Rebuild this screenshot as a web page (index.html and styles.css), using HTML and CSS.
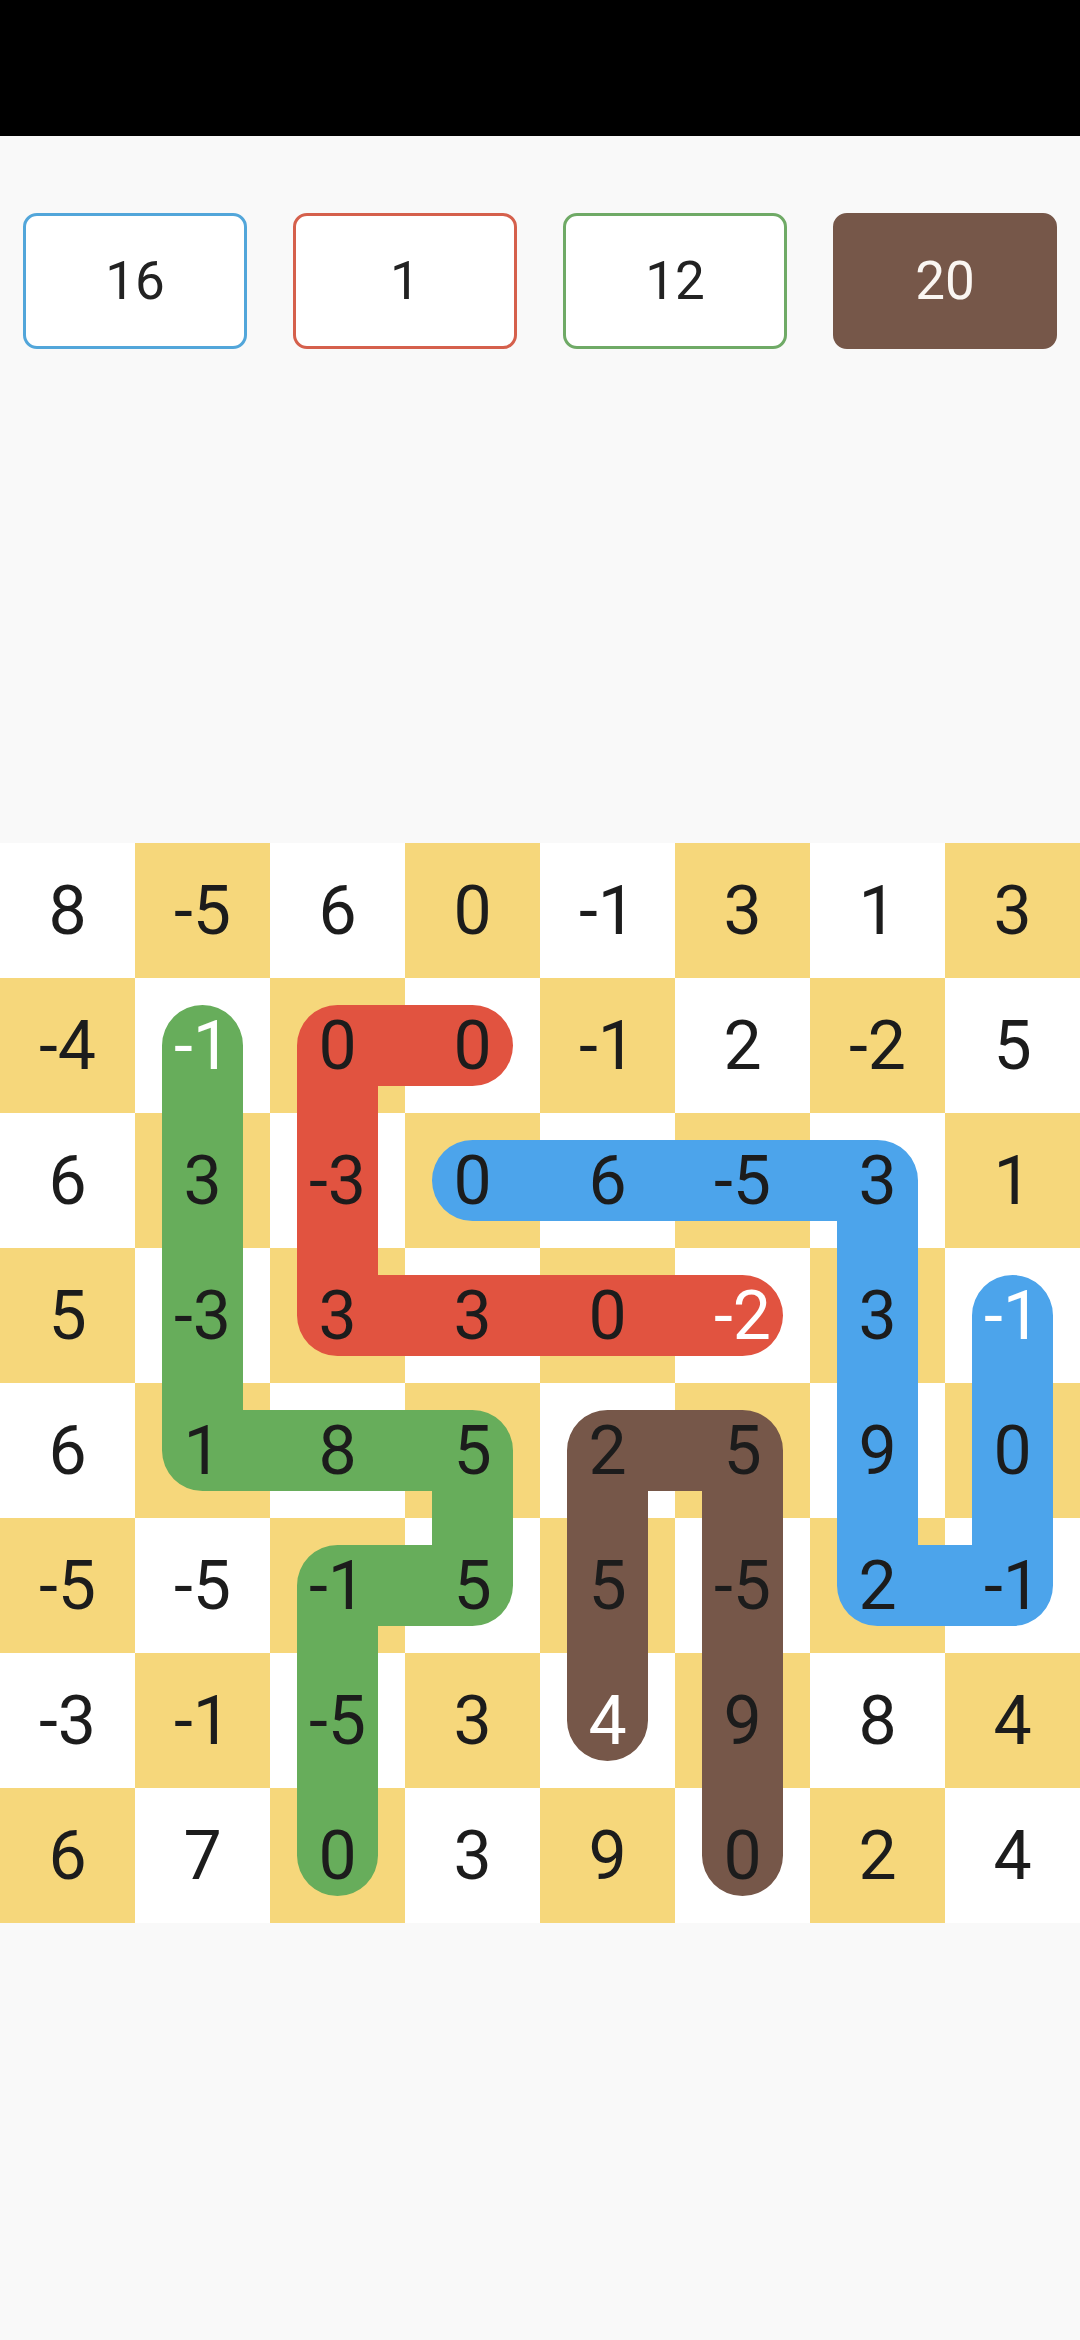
FILE: index.html
```html
<!DOCTYPE html>
<html><head>
  <meta charset="UTF-8">
  <meta name="viewport" content="width=device-width,initial-scale=1.0">
  <title>Number Paths</title>
  <link rel="stylesheet" href="styles.css">
</head><body>
<div id="statusbar"></div>
<div id="scores">
  <div class="score blue">16</div>
  <div class="score red">1</div>
  <div class="score green">12</div>
  <div class="score brown active">20</div>
</div>
<div id="board">
  <svg class="paths" viewBox="0 0 1080 1080">
    <polyline class="p-green" points="202.5,202.5 202.5,607.5 472.5,607.5 472.5,742.5 337.5,742.5 337.5,1012.5"/>
    <polyline class="p-red" points="472.5,202.5 337.5,202.5 337.5,472.5 742.5,472.5"/>
    <polyline class="p-blue" points="472.5,337.5 877.5,337.5 877.5,742.5 1012.5,742.5 1012.5,472.5"/>
    <polyline class="p-brown" points="742.5,1012.5 742.5,607.5 607.5,607.5 607.5,877.5"/>
  </svg>
  <div class="cells">
    <div>8</div><div>-5</div><div>6</div><div>0</div><div>-1</div><div>3</div><div>1</div><div>3</div>
    <div>-4</div><div class="head">-1</div><div>0</div><div>0</div><div>-1</div><div>2</div><div>-2</div><div>5</div>
    <div>6</div><div>3</div><div>-3</div><div>0</div><div>6</div><div>-5</div><div>3</div><div>1</div>
    <div>5</div><div>-3</div><div>3</div><div>3</div><div>0</div><div class="head">-2</div><div>3</div><div class="head">-1</div>
    <div>6</div><div>1</div><div>8</div><div>5</div><div>2</div><div>5</div><div>9</div><div>0</div>
    <div>-5</div><div>-5</div><div>-1</div><div>5</div><div>5</div><div>-5</div><div>2</div><div>-1</div>
    <div>-3</div><div>-1</div><div>-5</div><div>3</div><div class="head">4</div><div>9</div><div>8</div><div>4</div>
    <div>6</div><div>7</div><div>0</div><div>3</div><div>9</div><div>0</div><div>2</div><div>4</div>
  </div>
</div>
</body>
</html>
```

FILE: styles.css
```css
html,body{
  margin:0;
  background-color:#f9f9f9;
  font-family:Roboto,"Noto Sans",sans-serif;
}
#statusbar{
  height:136px;
  background-color:#000;
}
#scores{
  display:flex;
  padding-top:77px;
  height:136px;
}
.score{
  width:224px;
  margin:0 23px;
  box-sizing:border-box;
  border:3px solid #ccc;
  border-radius:14px;
  background-color:#fff;
  display:flex;
  align-items:center;
  justify-content:center;
  font-size:53px;
  color:#222;
}
.score.blue{border-color:#52a6da;}
.score.red{border-color:#d5604c;}
.score.green{border-color:#6faa66;}
.score.brown{border-color:#765749;}
.score.active{
  background-color:#765749;
  color:#faf6f2;
}
#board{
  position:relative;
  width:1080px;
  height:1080px;
  margin-top:494px;
  background:repeating-conic-gradient(#f6d77b 0 25%,#fff 0 50%) 0 0/270px 270px;
}
.paths{
  position:absolute;
  left:0;
  top:0;
  width:1080px;
  height:1080px;
}
.paths polyline{
  fill:none;
  stroke-width:81;
  stroke-linecap:round;
  stroke-linejoin:round;
}
.p-green{stroke:#67ad5b;}
.p-red{stroke:#e15340;}
.p-blue{stroke:#4ca4eb;}
.p-brown{stroke:#765749;}
.cells{
  position:relative;
  display:grid;
  grid-template-columns:repeat(8,135px);
  grid-auto-rows:135px;
}
.cells div{
  display:flex;
  align-items:center;
  justify-content:center;
  font-size:68px;
  color:#1c1c1c;
}
.cells .head{
  color:#fff;
}
```
